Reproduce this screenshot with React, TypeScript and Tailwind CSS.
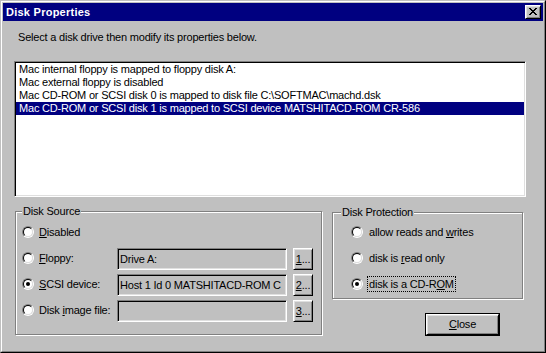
const raised =
  'border border-t-white border-l-white border-r-black border-b-black shadow-[inset_1px_1px_0_#dfdfdf,inset_-1px_-1px_0_#808080]'
const sunken =
  'border border-t-[#808080] border-l-[#808080] border-r-white border-b-white shadow-[inset_1px_1px_0_#000,inset_-1px_-1px_0_#dfdfdf]'

const drives = [
  'Mac internal floppy is mapped to floppy disk A:',
  'Mac external floppy is disabled',
  'Mac CD-ROM or SCSI disk 0 is mapped to disk file C:\\SOFTMAC\\machd.dsk',
  'Mac CD-ROM or SCSI disk 1 is mapped to SCSI device MATSHITACD-ROM CR-586',
]

function Radio({ checked }: { checked?: boolean }) {
  return (
    <span className="flex w-3 h-3 shrink-0 rounded-full border border-t-[#808080] border-l-[#808080] border-r-white border-b-white">
      <span className="flex w-full h-full items-center justify-center rounded-full bg-white border border-t-black border-l-black border-r-[#dfdfdf] border-b-[#dfdfdf]">
        {checked && <span className="w-1 h-1 rounded-full bg-black" />}
      </span>
    </span>
  )
}

function SourceRow({ label, value, btn, checked }: { label: React.ReactNode; value?: string; btn?: string; checked?: boolean }) {
  return (
    <div className="flex items-center h-[22px]">
      <div className="flex items-center gap-[5px] w-[95px] pb-[2px]">
        <Radio checked={checked} />
        <span>{label}</span>
      </div>
      {btn && (
        <>
          <div className={`w-[170px] h-[22px] ${sunken} pl-[2px] flex items-center overflow-hidden whitespace-nowrap`}>
            {value}
          </div>
          <button className={`ml-[6px] w-[20px] h-[22px] ${raised} flex items-center justify-center`}>
            <span>
              <u>{btn}</u>...
            </span>
          </button>
        </>
      )}
    </div>
  )
}

function ProtRow({ children, checked }: { children: React.ReactNode; checked?: boolean }) {
  return (
    <div className="flex items-center h-4">
      <Radio checked={checked} />
      <span
        className={`ml-[4px] px-px h-4 flex items-center whitespace-pre border ${
          checked ? 'border-dotted border-black' : 'border-transparent'
        }`}
      >
        {children}
      </span>
    </div>
  )
}

export default function App() {
  return (
    <div className="w-[546px] h-[353px] bg-[#c0c0c0] border border-t-[#c0c0c0] border-l-[#c0c0c0] border-r-black border-b-black font-['Liberation_Sans',Arial,sans-serif] text-[11px] leading-[13px] tracking-[-0.2px] text-black">
      <div className="h-full border border-t-white border-l-white border-r-[#808080] border-b-[#808080] p-px flex flex-col">
        {/* title bar */}
        <div className="h-[18px] shrink-0 bg-[#000080] flex items-center justify-between pl-[3px] pr-[2px]">
          <span className="text-white font-bold text-[11px] tracking-[0.25px]">Disk Properties</span>
          <button className={`w-4 h-[14px] ${raised} bg-[#c0c0c0] flex items-center justify-center pb-px`}>
            <svg width="8" height="7" viewBox="0 0 8 7" shapeRendering="crispEdges">
              <path
                fill="#000"
                d="M0 0h2v1H0zM6 0h2v1H6zM1 1h2v1H1zM5 1h2v1H5zM2 2h4v1H2zM3 3h2v1H3zM2 4h4v1H2zM1 5h2v1H1zM5 5h2v1H5zM0 6h2v1H0zM6 6h2v1H6z"
              />
            </svg>
          </button>
        </div>

        <div className="flex flex-col pl-[11px] pr-[17px]">
          <p className="ml-[4px] mt-[10px]">Select a disk drive then modify its properties below.</p>

          {/* drive list */}
          <div className={`mt-[17px] w-[512px] h-[136px] bg-white ${sunken} p-px`}>
            {drives.map((d, i) => (
              <div
                key={i}
                className={`h-[13px] pl-[3px] whitespace-nowrap ${i === 3 ? 'bg-[#000080] text-white' : ''}`}
              >
                {d}
              </div>
            ))}
          </div>

          <div className="flex items-start mt-[14px]">
            {/* Disk Source */}
            <div className="relative ml-px w-[307px] h-[124px] border border-[#808080] shadow-[1px_1px_0_#fff,inset_1px_1px_0_#fff] pt-[10px] pl-[6px] flex flex-col gap-[4px]">
              <span className="absolute -top-[7px] left-[6px] px-px bg-[#c0c0c0]">Disk Source</span>
              <SourceRow label={<><u>D</u>isabled</>} />
              <SourceRow label={<><u>F</u>loppy:</>} value="Drive A:" btn="1" />
              <SourceRow label={<><u>S</u>CSI device:</>} value="Host 1 Id 0 MATSHITACD-ROM C" btn="2" checked />
              <SourceRow label={<>Disk <u>i</u>mage file:</>} value="" btn="3" />
            </div>

            {/* Disk Protection + Close */}
            <div className="ml-[10px] mt-px flex flex-col">
              <div className="relative w-[191px] h-[87px] border border-[#808080] shadow-[1px_1px_0_#fff,inset_1px_1px_0_#fff] pt-[11px] pl-[18px] flex flex-col gap-[10px]">
                <span className="absolute -top-[7px] left-[8px] px-px bg-[#c0c0c0]">Disk Protection</span>
                <ProtRow>
                  {'allow reads and '}<u>w</u>rites
                </ProtRow>
                <ProtRow>
                  {'disk is '}<u>r</u>ead only
                </ProtRow>
                <ProtRow checked>
                  {'disk is a CD-R'}<u>O</u>M
                </ProtRow>
              </div>
              <button className="mt-[14px] ml-[93px] w-[75px] h-[23px] border border-black">
                <span className={`flex w-full h-full items-center justify-center ${raised}`}>
                  <span>
                    <u>C</u>lose
                  </span>
                </span>
              </button>
            </div>
          </div>
        </div>
      </div>
    </div>
  )
}
